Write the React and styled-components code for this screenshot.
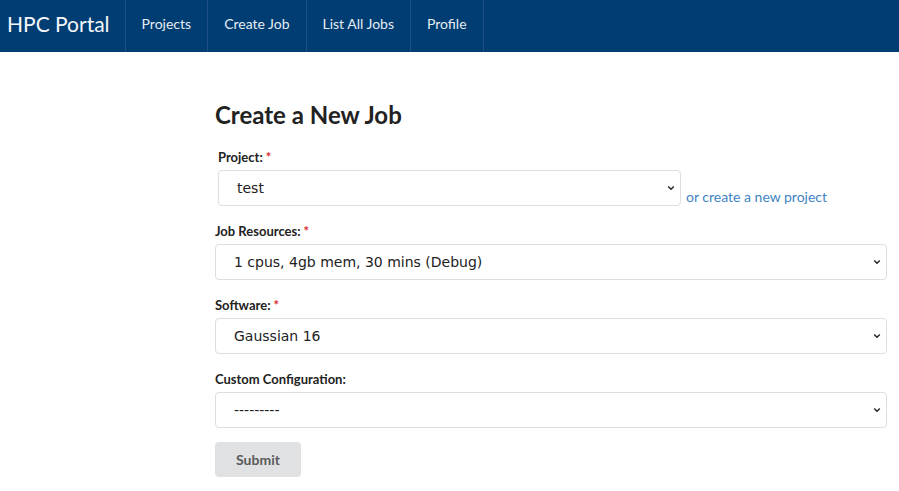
import React from "react";
import styled, { createGlobalStyle } from "styled-components";

const Global = createGlobalStyle`
  html, body { margin: 0; padding: 0; background: #fff; }
  body { font-family: Lato, "Open Sans", sans-serif; color: #222; }
  * { box-sizing: border-box; }
`;

const Nav = styled.nav`
  display: flex;
  align-items: stretch;
  height: 52px;
  background: #003d73;
`;

const Brand = styled.a`
  display: flex;
  align-items: center;
  padding: 0 15px 5px 7px;
  font-size: 21px;
  color: #f4f7fa;
  text-decoration: none;
  border-right: 1px solid #1f5083;
`;

const NavItem = styled.a`
  display: flex;
  align-items: center;
  padding: 0 16px 5px;
  font-size: 14px;
  color: #e6ecf2;
  text-decoration: none;
  border-right: 1px solid #1f5083;
`;

const Main = styled.main`
  padding: 48px 12px 14px 215px;
`;

const Title = styled.h1`
  margin: 0 0 16px;
  font-size: 24px;
  font-weight: 700;
  color: #222;
  line-height: 30px;
`;

const Form = styled.form`
  display: flex;
  flex-direction: column;
  align-items: stretch;
  gap: 14px;
`;

const Field = styled.div`
  display: flex;
  flex-direction: column;
  gap: 4px;
  padding-left: ${(p) => (p.$indent ? "3px" : "0")};
`;

const Label = styled.label`
  padding-top: 2px;
  font-size: 13px;
  font-weight: 700;
  color: #222;
  line-height: 18px;
`;

const Req = styled.span`
  color: #db2828;
  margin-left: 3px;
`;

const Row = styled.div`
  display: flex;
  align-items: flex-end;
  gap: 5px;
`;

const SelectWrap = styled.div`
  position: relative;
  width: ${(p) => p.$width || "100%"};
`;

const Select = styled.select`
  appearance: none;
  -webkit-appearance: none;
  display: block;
  width: 100%;
  height: 36px;
  padding: 0 30px 0 18px;
  border: 1px solid #dedede;
  border-radius: 4px;
  background: #fff;
  font-family: "DejaVu Sans", sans-serif;
  font-size: 14px;
  color: #222;
  outline: none;
`;

const Chevron = styled.svg`
  position: absolute;
  right: 4px;
  top: 50%;
  transform: translateY(-50%);
  pointer-events: none;
`;

const Link = styled.a`
  font-size: 14px;
  color: #4183c4;
  text-decoration: none;
  line-height: 16px;
  padding-bottom: 1px;
`;

const Button = styled.button`
  align-self: flex-start;
  width: 86px;
  height: 35px;
  border: none;
  border-radius: 4px;
  background: #e0e1e2;
  color: #5a5a5a;
  font-family: Lato, sans-serif;
  font-weight: 700;
  font-size: 14px;
`;

function Dropdown({ value, width }) {
  return (
    <SelectWrap $width={width}>
      <Select defaultValue={value}>
        <option>{value}</option>
      </Select>
      <Chevron width="12" height="12" viewBox="0 0 12 12">
        <path d="M3.2 4.6 L6 7.3 L8.8 4.6" fill="none" stroke="#222" strokeWidth="1.4" />
      </Chevron>
    </SelectWrap>
  );
}

export default function App() {
  return (
    <>
      <Global />
      <Nav>
        <Brand href="#">HPC Portal</Brand>
        <NavItem href="#">Projects</NavItem>
        <NavItem href="#">Create Job</NavItem>
        <NavItem href="#">List All Jobs</NavItem>
        <NavItem href="#">Profile</NavItem>
      </Nav>
      <Main>
        <Title>Create a New Job</Title>
        <Form onSubmit={(e) => e.preventDefault()}>
          <Field $indent>
            <Label>
              Project:<Req>*</Req>
            </Label>
            <Row>
              <Dropdown value="test" width="463px" />
              <Link href="#">or create a new project</Link>
            </Row>
          </Field>
          <Field>
            <Label>
              Job Resources:<Req>*</Req>
            </Label>
            <Dropdown value="1 cpus, 4gb mem, 30 mins (Debug)" />
          </Field>
          <Field>
            <Label>
              Software:<Req>*</Req>
            </Label>
            <Dropdown value="Gaussian 16" />
          </Field>
          <Field>
            <Label>Custom Configuration:</Label>
            <Dropdown value="---------" />
          </Field>
          <Button type="submit">Submit</Button>
        </Form>
      </Main>
    </>
  );
}
